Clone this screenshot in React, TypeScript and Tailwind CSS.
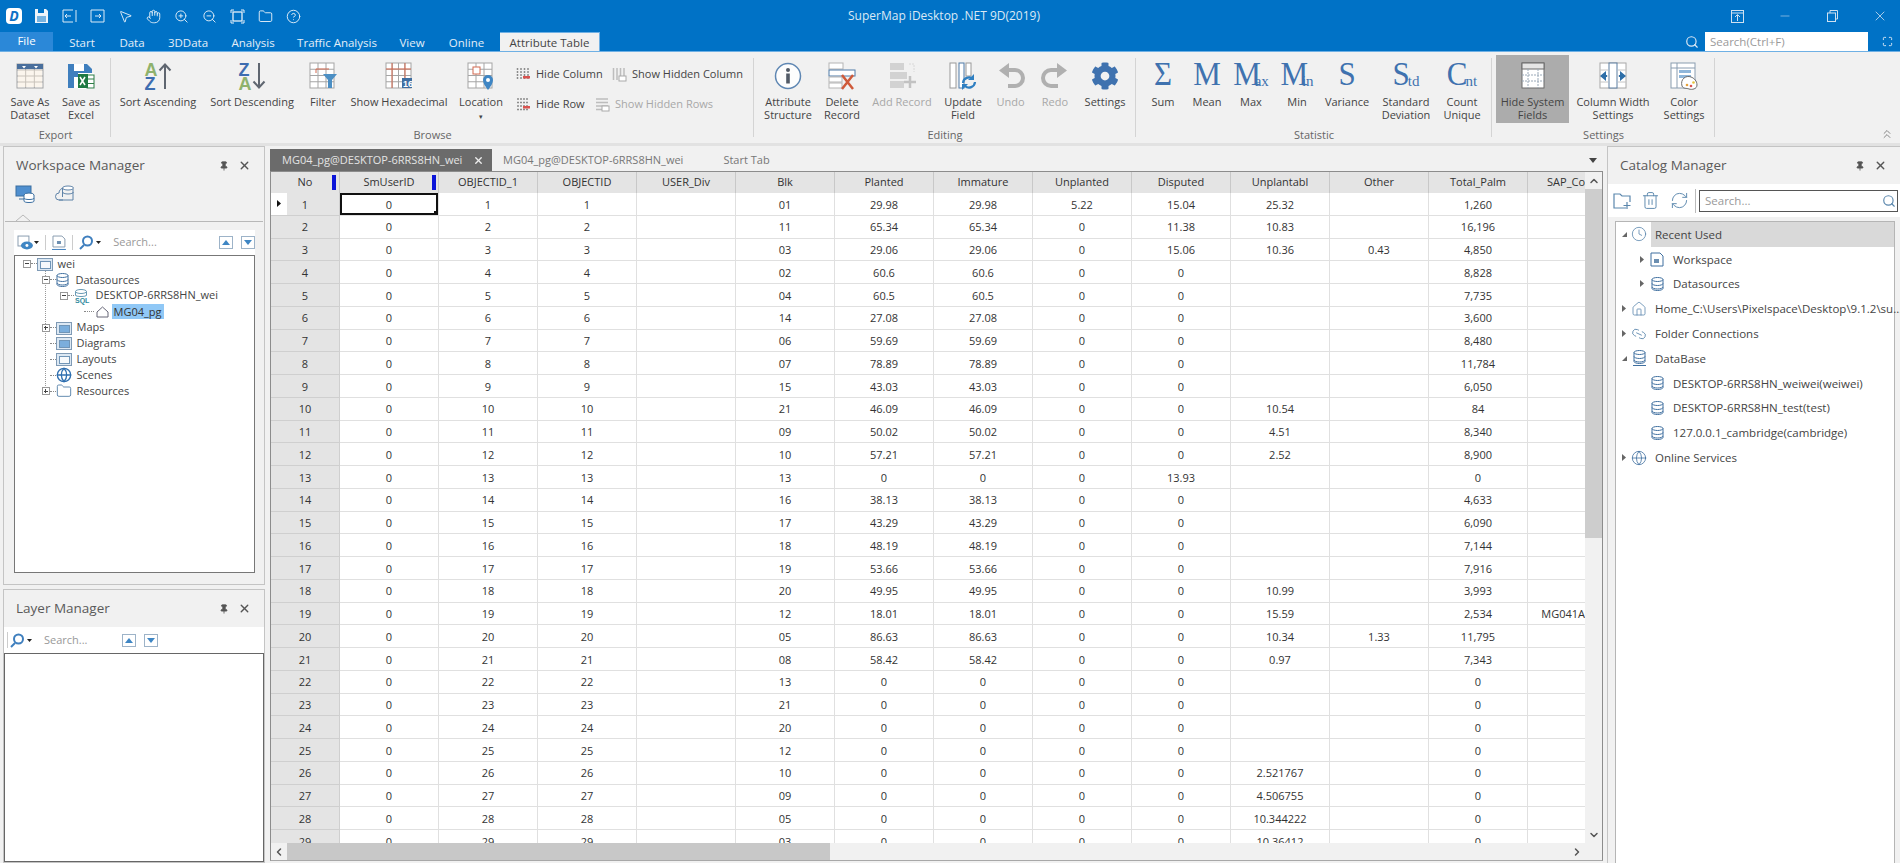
import { ChevronDown, ChevronLeft, ChevronRight, ChevronUp, ChevronsUp, CircleHelp, Clock, Folder, Globe, Hand, House, Link2, Maximize, Minus, MousePointer2, Pin, RefreshCw, Search, Trash2, X, ZoomIn, ZoomOut } from "lucide-react";
import { FaCog } from "react-icons/fa";

const blue = "#3f72af";

/* ---------- small drawings ---------- */

function Grid({ x = 1, y = 1, w = 26, h = 24, cols = 3, rows = 4, line = "#8a8a8a" }: { x?: number; y?: number; w?: number; h?: number; cols?: number; rows?: number; line?: string }) {
  const vs = Array.from({ length: cols - 1 }, (_, i) => x + ((i + 1) * w) / cols);
  const hs = Array.from({ length: rows - 1 }, (_, i) => y + ((i + 1) * h) / rows);
  return (
    <g fill="none" stroke={line} strokeWidth="1">
      <rect x={x} y={y} width={w} height={h} fill="#fff" />
      {vs.map((v) => <line key={v} x1={v} x2={v} y1={y} y2={y + h} />)}
      {hs.map((v) => <line key={v} x1={x} x2={x + w} y1={v} y2={v} />)}
    </g>
  );
}

function Ico({ children, w = 28, h = 28 }: { children: React.ReactNode; w?: number; h?: number }) {
  return <svg width={w} height={h} viewBox={`0 0 ${w} ${h}`} className="block shrink-0 overflow-visible">{children}</svg>;
}

const SaveDataset = () => (
  <Ico>
    <Grid x={1} y={2} w={26} h={24} cols={3} rows={4} line="#a3a3a3" />
    <rect x="2" y="8" width="24" height="17" fill="#f6e9d6" opacity=".45" />
    <rect x="1" y="2" width="26" height="5" fill="#4a6f9c" />
    <path d="M6 4h4l-2 2.500zM18 4h4l-2 2.500z" fill="#fff" />
  </Ico>
);

const SaveExcel = () => (
  <Ico>
    <path d="M1 2h19l5 5v19H1z" fill="#3f7fbe" />
    <rect x="7" y="2" width="10" height="7" fill="#fff" />
    <rect x="7" y="15" width="12" height="11" fill="#fff" />
    <rect x="11" y="11" width="16" height="16" fill="#fff" />
    <rect x="20" y="13" width="7" height="13" fill="none" stroke="#2d7d46" />
    <path d="M20 17h7M20 21.500h7" stroke="#2d7d46" />
    <rect x="11" y="12" width="10" height="14" fill="#1f7a43" />
    <path d="M13 15l5 8M18 15l-5 8" stroke="#fff" strokeWidth="1.500" />
  </Ico>
);

function Sort({ down }: { down?: boolean }) {
  const top = down ? "Z" : "A";
  const bottom = down ? "A" : "Z";
  const color = (c: string) => (c === "A" ? "#8fb26d" : "#3d6db0");
  return (
    <Ico w={30}>
      <text x="1.500" y="13.500" fontSize="18" fontWeight="700" fontFamily="Liberation Sans" fill={color(top)}>{top}</text>
      <text x="1.500" y="27.500" fontSize="18" fontWeight="700" fontFamily="Liberation Sans" fill={color(bottom)}>{bottom}</text>
      {down
        ? <path d="M22 1v24M16.500 19.500l5.500 6 5.500-6" fill="none" stroke="#5f6670" strokeWidth="2" />
        : <path d="M22 27V3M16.500 8.500l5.500-6 5.500 6" fill="none" stroke="#5f6670" strokeWidth="2" />}
    </Ico>
  );
}

const FilterIco = () => (
  <Ico>
    <Grid x={1} y={1} w={24} h={25} line="#a5a5a5" />
    <path d="M7 11V7h13" fill="none" stroke="#d46a50" />
    <path d="M14 12h14l-5 6v8h-4v-8z" fill="#4c8fc4" />
  </Ico>
);

const HexIco = () => (
  <Ico>
    <Grid x={1} y={1} w={25} h={25} cols={4} line="#a5a5a5" />
    <path d="M7 1v25M1 7h25M20 1v18" stroke="#d46a50" fill="none" />
    <rect x="17" y="16" width="10" height="10" fill="#3f6ea0" />
    <text x="18" y="25" fontSize="9" fontWeight="700" fontFamily="Liberation Sans" fill="#fff">16</text>
  </Ico>
);

const LocationIco = () => (
  <Ico>
    <Grid x={1} y={1} w={24} h={25} line="#a5a5a5" />
    <rect x="6" y="5" width="7" height="7" fill="#fff" stroke="#d46a50" />
    <path d="M21 28c-3-4-5-7-5-10a5 5 0 0 1 10 0c0 3-2 6-5 10z" fill="#3f86c4" />
    <circle cx="21" cy="18" r="2" fill="#fff" />
  </Ico>
);

function SmallIco({ kind, dim }: { kind: "col" | "row"; dim?: boolean }) {
  const c = dim ? "#bdbdbd" : "#8c8c8c";
  return (
    <Ico w={14} h={16}>
      {kind === "col"
        ? <path d="M1.500 2v12M5 2v12M8.500 2v12M12 2v12" stroke={c} strokeWidth="1.500" strokeDasharray={dim ? undefined : "2 1"} />
        : <path d="M1 3h12M1 6.500h12M1 10h12M1 13.500h12" stroke={c} strokeWidth="1.500" strokeDasharray={dim ? undefined : "2 1"} />}
      <rect x="7" y="10" width="7" height={dim ? 5 : 2.500} fill={dim ? "#fff" : "#d9534f"} stroke={dim ? "#aaa" : "none"} />
    </Ico>
  );
}

const InfoIco = () => (
  <Ico>
    <circle cx="14" cy="14" r="12.500" fill="#fdfdfd" stroke="#5f87b3" strokeWidth="1.500" />
    <circle cx="14" cy="8" r="2" fill="#525a66" />
    <rect x="12.200" y="11.500" width="3.600" height="10" fill="#525a66" />
  </Ico>
);

const DeleteIco = () => (
  <Ico>
    <rect x="1" y="1" width="14" height="6" fill="#fff" stroke="#b5b5b5" />
    <rect x="1" y="8" width="26" height="6" fill="#fff" stroke="#4e7ba8" />
    <rect x="1" y="15" width="13" height="5" fill="#fff" stroke="#b5b5b5" />
    <rect x="1" y="21" width="13" height="5" fill="#fff" stroke="#b5b5b5" />
    <path d="M14 13l11 14M25 13L14 27" stroke="#cf5a3a" strokeWidth="2.500" />
  </Ico>
);

const AddIco = () => (
  <Ico>
    <path d="M2 1h14v7H2zM2 10h17v7H2zM2 19h14v7H2z" fill="#d2d2d2" />
    <path d="M22 14v12M16 20h12" stroke="#c2c2c2" strokeWidth="2.500" />
    <path d="M21 2h5v8" fill="none" stroke="#d8d8d8" strokeDasharray="2 1" />
  </Ico>
);

const UpdateIco = () => (
  <Ico>
    <rect x="1" y="1" width="6" height="25" fill="#fff" stroke="#9a9a9a" />
    <rect x="10" y="1" width="5" height="25" fill="#fff" stroke="#4e7ba8" />
    <rect x="17" y="1" width="5" height="13" fill="#fff" stroke="#9a9a9a" />
    <path d="M14 21a6 6 0 0 1 10-4M26 20a6 6 0 0 1-10 4" fill="none" stroke="#2f7fc1" strokeWidth="2.200" />
    <path d="M25 12v6h-6zM13 28v-6h6z" fill="#2f7fc1" />
  </Ico>
);

const UndoIco = ({ flip }: { flip?: boolean }) => (
  <svg width="28" height="28" viewBox="0 0 28 28" className={flip ? "block -scale-x-100" : "block"}>
    <path d="M10 8h8a7 7 0 0 1 0 16h-7" fill="none" stroke="#b0b0b0" strokeWidth="4" />
    <path d="M12 1v15L2 8.500z" fill="#b0b0b0" />
  </svg>
);

function Stat({ big, sub, tight }: { big: string; sub?: string; tight?: boolean }) {
  return (
    <span className="flex h-[30px] items-end justify-center font-['Liberation_Serif',serif] leading-none text-[#3f72af]">
      <span className="origin-bottom scale-y-[1.12] text-[31px] leading-[30px]">{big}</span>
      {sub ? <span className={`text-[15px] leading-[20px] ${tight ? "-ml-[6px]" : "-ml-[2px]"}`}>{sub}</span> : null}
    </span>
  );
}

const HideSystemIco = () => (
  <Ico>
    <rect x="3" y="1" width="22" height="25" fill="#fff" stroke="#6b6b6b" />
    <rect x="3" y="1" width="22" height="6" fill="#e5e5e5" stroke="#6b6b6b" />
    <path d="M3 13h22M3 19h22M9 7v19M19 7v19" stroke="#9aa9b8" strokeDasharray="2 1" fill="none" />
  </Ico>
);

const ColWidthIco = () => (
  <Ico>
    <rect x="1" y="1" width="26" height="25" fill="#fff" stroke="#a8a8a8" />
    <rect x="10" y="1" width="8" height="25" fill="#fff" stroke="#5b7da0" />
    <path d="M1 8h8M19 8h8M1 14h8M19 14h8M1 20h8M19 20h8" stroke="#c4c4c4" />
    <path d="M2 14h6M26 14h-6" stroke="#2d6ea8" strokeWidth="2" />
    <path d="M7 9v10l-6-5zM21 9v10l6-5z" fill="#2d6ea8" />
  </Ico>
);

const ColorIco = () => (
  <Ico>
    <rect x="1" y="1" width="24" height="25" fill="#fff" stroke="#8a9db0" />
    <path d="M1 6h24M7 1v25" stroke="#8a9db0" />
    <rect x="9" y="8" width="12" height="3" fill="#8fb6da" />
    <rect x="9" y="13" width="12" height="3" fill="#8fb6da" />
    <path d="M12 24c-2-7 4-11 9-9 3 1 6 4 6 8 0 4-5 5-8 4-2-1-6 0-7-3z" fill="#fff" stroke="#6b6b6b" />
    <circle cx="17" cy="23" r="1.300" fill="#e6a23c" />
    <circle cx="21" cy="24" r="1.300" fill="#d9534f" />
    <circle cx="23.500" cy="20.500" r="1.300" fill="#e6c23c" />
  </Ico>
);

/* ---------- ribbon ---------- */

function RibbonBtn({ w, label, icon, dim, active }: { w: string; label: React.ReactNode; icon: React.ReactNode; dim?: boolean; active?: boolean }) {
  return (
    <div className={`flex h-[68px] shrink-0 flex-col items-center pt-[6px] text-center leading-[13px] ${w} ${active ? "bg-[#acacac]" : ""} ${dim ? "text-[#a8a8a8]" : "text-[#444]"}`}>
      <div className="flex h-[30px] items-center justify-center">{icon}</div>
      <div className="mt-[4px] whitespace-nowrap">{label}</div>
    </div>
  );
}

function RibbonGroup({ w, label, children, pad }: { w: string; label: string; children: React.ReactNode; pad?: string }) {
  return (
    <div className={`relative flex h-[87px] shrink-0 flex-col ${w}`}>
      <div className={`flex h-[68px] ${pad ?? ""}`}>{children}</div>
      <div className="mt-[5px] text-center leading-[14px] text-[#666]">{label}</div>
      <div className="absolute right-0 top-[3px] bottom-[5px] w-px bg-[#d4d4d4]" />
    </div>
  );
}

function Ribbon() {
  return (
    <div className="flex h-[91px] shrink-0 bg-[#f1f1f1] pt-[3px] text-[11px]">
      <RibbonGroup w="w-[111px]" label="Export" pad="pl-[6px]">
        <RibbonBtn w="w-[48px]" icon={<SaveDataset />} label={<>Save As<br />Dataset</>} />
        <RibbonBtn w="w-[54px]" icon={<SaveExcel />} label={<>Save as<br />Excel</>} />
      </RibbonGroup>
      <RibbonGroup w="w-[643px]" label="Browse">
        <RibbonBtn w="w-[94px]" icon={<Sort />} label="Sort Ascending" />
        <RibbonBtn w="w-[94px]" icon={<Sort down />} label="Sort Descending" />
        <RibbonBtn w="w-[48px]" icon={<FilterIco />} label="Filter" />
        <RibbonBtn w="w-[104px]" icon={<HexIco />} label="Show Hexadecimal" />
        <RibbonBtn w="w-[60px]" icon={<LocationIco />} label={<>Location<br /><span className="text-[7px]">▾</span></>} />
        <div className="flex flex-col gap-[8px] pl-[5px] pt-[8px] text-[#444]">
          <div className="flex h-[22px] items-center">
            <SmallIco kind="col" />
            <span className="ml-[6px] w-[66px] whitespace-nowrap">Hide Column</span>
            <span className="ml-[10px]"><SmallIco kind="col" dim /></span>
            <span className="ml-[6px] whitespace-nowrap">Show Hidden Column</span>
          </div>
          <div className="flex h-[22px] items-center">
            <SmallIco kind="row" />
            <span className="ml-[6px] w-[49px] whitespace-nowrap">Hide Row</span>
            <span className="ml-[10px]"><SmallIco kind="row" dim /></span>
            <span className="ml-[6px] whitespace-nowrap text-[#a8a8a8]">Show Hidden Rows</span>
          </div>
        </div>
      </RibbonGroup>
      <RibbonGroup w="w-[382px]" label="Editing" pad="pl-[5px]">
        <RibbonBtn w="w-[58px]" icon={<InfoIco />} label={<>Attribute<br />Structure</>} />
        <RibbonBtn w="w-[50px]" icon={<DeleteIco />} label={<>Delete<br />Record</>} />
        <RibbonBtn w="w-[70px]" dim icon={<AddIco />} label="Add Record" />
        <RibbonBtn w="w-[52px]" icon={<UpdateIco />} label={<>Update<br />Field</>} />
        <RibbonBtn w="w-[43px]" dim icon={<UndoIco />} label="Undo" />
        <RibbonBtn w="w-[46px]" dim icon={<UndoIco flip />} label="Redo" />
        <RibbonBtn w="w-[54px]" icon={<FaCog size={28} color={blue} />} label="Settings" />
      </RibbonGroup>
      <RibbonGroup w="w-[356px]" label="Statistic" pad="pl-[5px]">
        <RibbonBtn w="w-[44px]" icon={<Stat big="Σ" />} label="Sum" />
        <RibbonBtn w="w-[44px]" icon={<Stat big="M" />} label="Mean" />
        <RibbonBtn w="w-[44px]" icon={<Stat big="M" sub="ax" tight />} label="Max" />
        <RibbonBtn w="w-[48px]" icon={<Stat big="M" sub="in" tight />} label="Min" />
        <RibbonBtn w="w-[52px]" icon={<Stat big="S" />} label="Variance" />
        <RibbonBtn w="w-[66px]" icon={<Stat big="S" sub="td" />} label={<>Standard<br />Deviation</>} />
        <RibbonBtn w="w-[46px]" icon={<Stat big="C" sub="nt" />} label={<>Count<br />Unique</>} />
      </RibbonGroup>
      <RibbonGroup w="w-[223px]" label="Settings" pad="pl-[4px]">
        <RibbonBtn w="w-[73px]" active icon={<HideSystemIco />} label={<>Hide System<br />Fields</>} />
        <RibbonBtn w="w-[88px]" icon={<ColWidthIco />} label={<>Column Width<br />Settings</>} />
        <RibbonBtn w="w-[54px]" icon={<ColorIco />} label={<>Color<br />Settings</>} />
      </RibbonGroup>
      <div className="flex flex-1 items-end justify-end pb-[2px] pr-[6px]">
        <ChevronsUp size={14} color="#777" strokeWidth={1.500} />
      </div>
    </div>
  );
}

/* ---------- title bar and tabs ---------- */

const Logo = () => (
  <span className="flex h-[16px] w-[16px] items-center justify-center rounded-[4px] bg-white text-[14px] font-bold italic leading-none text-[#0f72c6]">D</span>
);

const ArrowBox = ({ right }: { right?: boolean }) => (
  <svg width="15" height="14" viewBox="0 0 15 14" className="block" fill="none" stroke="#dcebf7">
    {right ? <path d="M4 1H1v12h3M4 1h10v12H4" /> : <path d="M11 1H1v12h10M14 1v12" />}
    {right ? <path d="M5 7h6M9 5l2 2-2 2" /> : <path d="M9 7H3M5 5L3 7l2 2" />}
  </svg>
);

const FloppyIco = () => (
  <svg width="15" height="16" viewBox="0 0 15 16" className="block">
    <path d="M1 1h11l2 2v12H1z" fill="#eef4fa" />
    <rect x="4" y="1" width="6" height="4" fill="#0072c6" />
    <path d="M3 9h9M3 11h9M3 13h9" stroke="#0072c6" />
  </svg>
);

const FitIco = () => (
  <svg width="15" height="15" viewBox="0 0 15 15" fill="none" stroke="#e4eff8" className="block">
    <rect x="3" y="3" width="9" height="9" strokeWidth="1.300" />
    <path d="M1 4V1h3M11 1h3v3M14 11v3h-3M4 14H1v-3" />
  </svg>
);

function TitleBar() {
  const ic = { size: 15, color: "#e4eff8", strokeWidth: 1.500 };
  return (
    <div className="flex h-[32px] shrink-0 items-center bg-[#0072c6] text-[12px] text-[#dbe9f5]">
      <div className="flex flex-1 items-center">
        <div className="flex w-[22px] justify-end"><Logo /></div>
        <div className="ml-[12px] flex items-center gap-[13px]">
          <FloppyIco />
          <ArrowBox />
          <ArrowBox right />
          <MousePointer2 {...ic} />
          <Hand {...ic} />
          <ZoomIn {...ic} />
          <ZoomOut {...ic} />
          <FitIco />
          <Folder {...ic} />
          <CircleHelp {...ic} />
        </div>
      </div>
      <div>SuperMap iDesktop .NET 9D(2019)</div>
      <div className="flex flex-1 items-center justify-end gap-[34.500px] pr-[12px]">
        <svg width="13" height="13" viewBox="0 0 13 13" fill="none" stroke="#cfe1f1"><rect x=".5" y=".5" width="12" height="12" /><path d="M.5 3h12M6.500 11V5M4 7l2.500-2.500L9 7" /></svg>
        <Minus size={14} color="#a9cbe8" strokeWidth={1.200} />
        <svg width="11" height="12" viewBox="0 0 11 12" fill="none" stroke="#cfe1f1"><rect x=".5" y="3" width="8" height="8.500" /><path d="M3 3V.5h7.500V9H8.500" /></svg>
        <X size={16} color="#cfe1f1" strokeWidth={1.200} />
      </div>
    </div>
  );
}

function TabRow() {
  const tabs: [string, string][] = [
    ["Start", "w-[58px]"],
    ["Data", "w-[42px]"],
    ["3DData", "w-[70px]"],
    ["Analysis", "w-[60px]"],
    ["Traffic Analysis", "w-[108px]"],
    ["View", "w-[42px]"],
    ["Online", "w-[67px]"],
  ];
  return (
    <div className="flex h-[20px] shrink-0 items-stretch border-b border-[#6fb0e4] bg-[#0072c6] text-[11.500px] text-[#e3eef8]">
      <div className="flex w-[53px] items-center justify-center bg-[#2b88d8] pb-[2px] text-white">File</div>
      {tabs.map(([t, w]) => (
        <div key={t} className={`flex items-center justify-center pt-[2px] ${w}`}>{t}</div>
      ))}
      <div className="flex w-[100px] items-center justify-center border-r border-t border-[#6fb0e4] bg-[#f1f1f1] pt-[2px] text-[#444]">Attribute Table</div>
      <div className="flex flex-1 items-center justify-end pr-[2px]">
        <Search size={14} color="#dfeaf5" strokeWidth={2} className="mr-[6px]" />
        <div className="flex h-[19px] w-[163px] items-center bg-white pl-[5px] text-[#9a9a9a]">Search(Ctrl+F)</div>
        <Maximize size={11} color="#dfeaf5" className="ml-[14px] mr-[5px]" />
      </div>
    </div>
  );
}

/* ---------- panels ---------- */

function PanelHead({ title }: { title: string }) {
  return (
    <div className="flex h-[37px] shrink-0 items-center pl-[12px] pr-[13px] text-[13.500px] text-[#5a5a5a]">
      <span className="flex-1">{title}</span>
      <Pin size={10} color="#555" fill="#555" />
      <X size={13} color="#555" strokeWidth={2.500} className="ml-[9px]" />
    </div>
  );
}

const UpDownBtn = ({ up }: { up?: boolean }) => (
  <span className="flex h-[13px] w-[14px] items-center justify-center border border-[#9db3c8] bg-white">
    <svg width="8" height="5" viewBox="0 0 8 5"><path d={up ? "M0 5h8L4 0z" : "M0 0h8L4 5z"} fill="#3f86c4" /></svg>
  </span>
);

const SearchLoop = () => (
  <span className="flex items-center">
    <svg width="14" height="15" viewBox="0 0 14 15" fill="none" stroke="#3f7fbe" strokeWidth="2"><circle cx="8.500" cy="6" r="4.500" /><path d="M5 10l-4 4" /></svg>
    <svg width="5" height="3" viewBox="0 0 5 3" className="ml-[3px]"><path d="M0 0h5L2.500 3z" fill="#222" /></svg>
  </span>
);

const Db = ({ c = "#3f6f9f" }: { c?: string }) => (
  <svg width="13" height="14" viewBox="0 0 13 14" fill="none" stroke={c} className="block shrink-0"><ellipse cx="6.500" cy="2.500" rx="5.500" ry="2" /><path d="M1 2.500v9c0 1 2.500 2 5.500 2s5.500-1 5.500-2v-9M1 6.500c0 1 2.500 2 5.500 2s5.500-1 5.500-2M1 10c0 1 2.500 2 5.500 2s5.500-1 5.500-2" /></svg>
);

const SqlIco = () => (
  <svg width="16" height="14" viewBox="0 0 16 14" className="block shrink-0 overflow-visible">
    <g fill="none" stroke="#6a9bb5"><ellipse cx="7" cy="2.500" rx="5.500" ry="2" /><path d="M1.500 2.500v4M12.500 2.500v4M1.500 6c0 1 2.500 1.500 5.500 1.500s5.500-.5 5.500-1.500" /></g>
    <text x="1" y="14" fontSize="7" fontWeight="700" fontFamily="Liberation Sans" fill="#2f8a9e">SQL</text>
  </svg>
);

const Box = ({ kind }: { kind: "minus" | "plus" }) => (
  <span className="relative z-10 flex h-[8px] w-[8px] shrink-0 items-center justify-center border border-[#999] bg-white">
    <span className="h-px w-[4px] bg-[#444]" />
    {kind === "plus" ? <span className="absolute h-[4px] w-px bg-[#444]" /> : null}
  </span>
);

const MiniFolder = ({ inner = "#5b9bd5" }: { inner?: string }) => (
  <svg width="16" height="14" viewBox="0 0 16 14" className="block shrink-0">
    <rect x=".5" y="1.500" width="15" height="12" fill="#dce8f3" stroke="#7f9ab5" />
    <rect x="3.500" y="4.500" width="10" height="7" fill={inner} opacity=".75" stroke="#4d7aa3" />
  </svg>
);

function TreeRow({ pad, box, icon, children }: { pad: string; box?: "minus" | "plus"; icon: React.ReactNode; children: React.ReactNode }) {
  return (
    <div className={`flex h-[15.900px] items-center whitespace-nowrap ${pad}`}>
      {box ? <Box kind={box} /> : <span className="w-[8px]" />}
      <span className="h-px w-[6px] border-t border-dotted border-[#888]" />
      {icon}
      <span className="ml-[5px]">{children}</span>
    </div>
  );
}

function WorkspacePanel() {
  return (
    <div className="flex h-[439px] shrink-0 flex-col border border-[#c4c4c4] bg-[#f1f1f1]">
      <PanelHead title="Workspace Manager" />
      <div className="flex h-[37px] shrink-0 items-start gap-[20px] pl-[11px] pt-[1px]">
        <svg width="20" height="18" viewBox="0 0 20 18"><rect x="1" y="1" width="15" height="10" fill="#4f8fcf" stroke="#3a6ea0" /><path d="M4 14h5" stroke="#3a6ea0" /><ellipse cx="14" cy="10" rx="5" ry="2" fill="#fff" stroke="#3a6ea0" /><path d="M9 10v6c0 1 2 1.500 5 1.500s5-.5 5-1.500v-6M9 13c0 1 2 1.500 5 1.500s5-.5 5-1.500" fill="#fff" stroke="#3a6ea0" /></svg>
        <svg width="20" height="17" viewBox="0 0 20 17" fill="none" stroke="#5f83a8"><path d="M8 15H4a3 3 0 0 1 0-7 5 5 0 0 1 5-5" /><path d="M4 15h14V4" /><ellipse cx="13" cy="3" rx="5.500" ry="2" fill="#fff" /><path d="M7.500 3v9M7.500 7c0 1 2.500 2 5.500 2s5.500-1 5.500-2" /></svg>
      </div>
      <div className="relative mx-[1px] h-px shrink-0 bg-[#b8b8b8]">
        <svg width="14" height="7" viewBox="0 0 14 7" className="absolute -top-[7px] left-[11px]"><path d="M0 7l7-6 7 6" fill="#f1f1f1" stroke="#b8b8b8" /></svg>
      </div>
      <div className="mt-[8px] flex h-[25px] w-[241px] shrink-0 items-center self-center bg-white pl-[3px] text-[11px] text-[#999]">
        <svg width="17" height="16" viewBox="0 0 17 16" fill="none"><rect x="1" y="1" width="11" height="10" stroke="#8a9db0" /><ellipse cx="10" cy="10.500" rx="6" ry="4" fill="#3f86c4" /><circle cx="10" cy="10.500" r="1.500" fill="#fff" /></svg>
        <svg width="5" height="3" viewBox="0 0 5 3" className="ml-[1px]"><path d="M0 0h5L2.500 3z" fill="#222" /></svg>
        <span className="mx-[6px] h-[15px] w-px bg-[#ccc]" />
        <svg width="14" height="15" viewBox="0 0 14 15" fill="none"><path d="M1 1h9l3 3v8H1z" stroke="#8a9db0" /><rect x="5" y="6" width="4" height="3" fill="#6b8eb0" /><path d="M0 14.500h14" stroke="#3f7fbe" /></svg>
        <span className="mx-[6px] h-[15px] w-px bg-[#ccc]" />
        <SearchLoop />
        <span className="ml-[12px] w-[106px]">Search...</span>
        <UpDownBtn up />
        <span className="ml-[8px]"><UpDownBtn /></span>
      </div>
      <div className="relative mx-auto h-[318px] w-[241px] shrink-0 border border-[#777] bg-white text-[11px] text-[#444]">
        <div className="absolute bottom-[182px] left-[30px] top-[15px] border-l border-dotted border-[#999]" />
        <TreeRow pad="pl-[8px]" box="minus" icon={<MiniFolder inner="#ffffff" />}>wei</TreeRow>
        <TreeRow pad="pl-[27px]" box="minus" icon={<Db />}><span className="ml-[2px]">Datasources</span></TreeRow>
        <TreeRow pad="pl-[45px]" box="minus" icon={<SqlIco />}><span className="ml-[1px]">DESKTOP-6RRS8HN_wei</span></TreeRow>
        <div className="flex h-[15.900px] items-center pl-[69px]">
          <span className="mr-[2px] w-[10px] border-t border-dotted border-[#888]" />
          <svg width="13" height="12" viewBox="0 0 13 12" fill="none" stroke="#667"><path d="M1 11V6l5.500-5L12 6v5z" /></svg>
          <span className="ml-[3px] bg-[#90c8f6] px-[2px] leading-[15px] text-[#333]">MG04_pg</span>
        </div>
        <TreeRow pad="pl-[27px]" box="plus" icon={<MiniFolder />}>Maps</TreeRow>
        <TreeRow pad="pl-[27px]" icon={<MiniFolder />}>Diagrams</TreeRow>
        <TreeRow pad="pl-[27px]" icon={<MiniFolder inner="#ffffff" />}>Layouts</TreeRow>
        <TreeRow pad="pl-[27px]" icon={<Globe size={16} color="#2f6fb0" />}>Scenes</TreeRow>
        <TreeRow pad="pl-[27px]" box="plus" icon={<Folder size={16} color="#4d7aa3" strokeWidth={1.300} />}>Resources</TreeRow>
      </div>
    </div>
  );
}

function LayerPanel() {
  return (
    <div className="mt-[4px] flex min-h-0 flex-1 flex-col border border-[#c4c4c4] bg-[#f1f1f1]">
      <PanelHead title="Layer Manager" />
      <div className="flex h-[26px] shrink-0 items-center bg-white pl-[3px] text-[11px] text-[#999]">
        <span className="mr-[2px] h-[16px] w-px bg-[#ccc]" />
        <SearchLoop />
        <span className="ml-[12px] w-[78px]">Search...</span>
        <UpDownBtn up />
        <span className="ml-[8px]"><UpDownBtn /></span>
      </div>
      <div className="flex-1 border border-[#666] bg-white" />
    </div>
  );
}

function CatRow({ pad, arrow, icon, sel, children }: { pad: string; arrow?: "open" | "closed"; icon: React.ReactNode; sel?: boolean; children: React.ReactNode }) {
  return (
    <div className={`flex h-[24.800px] items-center whitespace-nowrap ${pad}`}>
      <span className="flex w-[10px] shrink-0 justify-center">
        {arrow === "open" ? <svg width="5" height="5" viewBox="0 0 5 5"><path d="M5 0v5H0z" fill="#666" /></svg> : null}
        {arrow === "closed" ? <svg width="4" height="7" viewBox="0 0 4 7"><path d="M0 0l4 3.500L0 7z" fill="#666" /></svg> : null}
      </span>
      <span className="flex w-[20px] shrink-0 justify-center">{icon}</span>
      <span className={`ml-[2px] flex h-full flex-1 items-center pl-[4px] ${sel ? "bg-[#d9d9d9]" : ""}`}>{children}</span>
    </div>
  );
}

const DocIco = () => (
  <svg width="14" height="15" viewBox="0 0 14 15" fill="none" stroke="#3f6f9f" className="block"><path d="M1 1h9l3 3v10H1z" /><rect x="4" y="7" width="5" height="4" fill="#6b8eb0" stroke="none" /></svg>
);

function CatalogPanel() {
  const c = "#5b87ad";
  return (
    <div className="ml-[4px] flex w-[293px] shrink-0 flex-col border-l border-t border-[#c4c4c4] bg-[#f1f1f1]">
      <PanelHead title="Catalog Manager" />
      <div className="flex h-[33px] shrink-0 items-center bg-white pl-[5px] pr-[2px] text-[11.500px]">
        <svg width="20" height="18" viewBox="0 0 20 18" fill="none" stroke={c} strokeWidth="1.200"><path d="M13 16H1V2h6l2 2h8v6" /><path d="M14 10v7M10.500 13.500h7" /></svg>
        <Trash2 size={19} color={c} strokeWidth={1.200} className="ml-[8px]" />
        <RefreshCw size={19} color={c} strokeWidth={1.200} className="ml-[10px]" />
        <span className="ml-[6px] h-[24px] w-px bg-[#bbb]" />
        <div className="ml-[3px] flex h-[22px] flex-1 items-center border border-[#555] bg-white pl-[5px] pr-[1px] text-[#999]">
          <span className="flex-1">Search...</span>
          <Search size={14} color={c} />
        </div>
      </div>
      <div className="ml-[7px] mr-[5px] mt-[4px] flex-1 border-l border-r border-t border-[#b5b5b5] bg-white text-[11.500px] text-[#444]">
        <CatRow pad="pl-[3px]" arrow="open" sel icon={<Clock size={16} color={c} strokeWidth={1.200} />}>Recent Used</CatRow>
        <CatRow pad="pl-[21px]" arrow="closed" icon={<DocIco />}>Workspace</CatRow>
        <CatRow pad="pl-[21px]" arrow="closed" icon={<Db />}>Datasources</CatRow>
        <CatRow pad="pl-[3px]" arrow="closed" icon={<House size={16} color={c} strokeWidth={1.200} />}>Home_C:\Users\Pixelspace\Desktop\9.1.2\su...</CatRow>
        <CatRow pad="pl-[3px]" arrow="closed" icon={<Link2 size={16} color={c} strokeWidth={1.200} className="rotate-[25deg]" />}>Folder Connections</CatRow>
        <CatRow pad="pl-[3px]" arrow="open" icon={<span className="border-b border-[#3f6f9f] pb-px"><Db /></span>}>DataBase</CatRow>
        <CatRow pad="pl-[21px]" icon={<Db />}>DESKTOP-6RRS8HN_weiwei(weiwei)</CatRow>
        <CatRow pad="pl-[21px]" icon={<Db />}>DESKTOP-6RRS8HN_test(test)</CatRow>
        <CatRow pad="pl-[21px]" icon={<Db />}>127.0.0.1_cambridge(cambridge)</CatRow>
        <CatRow pad="pl-[3px]" arrow="closed" icon={<Globe size={16} color="#3f6f9f" strokeWidth={1.200} />}>Online Services</CatRow>
      </div>
    </div>
  );
}

/* ---------- attribute table ---------- */

const heads = ["SmUserID", "OBJECTID_1", "OBJECTID", "USER_Div", "Blk", "Planted", "Immature", "Unplanted", "Disputed", "Unplantabl", "Other", "Total_Palm", "SAP_Co"];

// blk, planted, immature, unplanted, disputed, unplantabl, other, total, sap
const rows: string[][] = [
  ["01", "29.98", "29.98", "5.22", "15.04", "25.32", "", "1,260", ""],
  ["11", "65.34", "65.34", "0", "11.38", "10.83", "", "16,196", ""],
  ["03", "29.06", "29.06", "0", "15.06", "10.36", "0.43", "4,850", ""],
  ["02", "60.6", "60.6", "0", "0", "", "", "8,828", ""],
  ["04", "60.5", "60.5", "0", "0", "", "", "7,735", ""],
  ["14", "27.08", "27.08", "0", "0", "", "", "3,600", ""],
  ["06", "59.69", "59.69", "0", "0", "", "", "8,480", ""],
  ["07", "78.89", "78.89", "0", "0", "", "", "11,784", ""],
  ["15", "43.03", "43.03", "0", "0", "", "", "6,050", ""],
  ["21", "46.09", "46.09", "0", "0", "10.54", "", "84", ""],
  ["09", "50.02", "50.02", "0", "0", "4.51", "", "8,340", ""],
  ["10", "57.21", "57.21", "0", "0", "2.52", "", "8,900", ""],
  ["13", "0", "0", "0", "13.93", "", "", "0", ""],
  ["16", "38.13", "38.13", "0", "0", "", "", "4,633", ""],
  ["17", "43.29", "43.29", "0", "0", "", "", "6,090", ""],
  ["18", "48.19", "48.19", "0", "0", "", "", "7,144", ""],
  ["19", "53.66", "53.66", "0", "0", "", "", "7,916", ""],
  ["20", "49.95", "49.95", "0", "0", "10.99", "", "3,993", ""],
  ["12", "18.01", "18.01", "0", "0", "15.59", "", "2,534", "MG041A"],
  ["05", "86.63", "86.63", "0", "0", "10.34", "1.33", "11,795", ""],
  ["08", "58.42", "58.42", "0", "0", "0.97", "", "7,343", ""],
  ["13", "0", "0", "0", "0", "", "", "0", ""],
  ["21", "0", "0", "0", "0", "", "", "0", ""],
  ["20", "0", "0", "0", "0", "", "", "0", ""],
  ["12", "0", "0", "0", "0", "", "", "0", ""],
  ["10", "0", "0", "0", "0", "2.521767", "", "0", ""],
  ["09", "0", "0", "0", "0", "4.506755", "", "0", ""],
  ["05", "0", "0", "0", "0", "10.344222", "", "0", ""],
  ["03", "0", "0", "0", "0", "10.36412", "", "0", ""],
];

function AttrTable() {
  return (
    <div className="ml-[5px] flex w-[1333px] shrink-0 flex-col pt-[3px]">
      <div className="flex h-[22px] shrink-0 items-center text-[11px] text-[#777]">
        <div className="flex h-full w-[222px] items-center justify-between bg-[#6b6b6b] pl-[12px] pr-[8px] text-[#e4e4e4]">
          <span>MG04_pg@DESKTOP-6RRS8HN_wei</span>
          <X size={11} color="#eee" strokeWidth={3} />
        </div>
        <span className="ml-[11px]">MG04_pg@DESKTOP-6RRS8HN_wei</span>
        <span className="ml-[40px] flex-1">Start Tab</span>
        <svg width="8" height="5" viewBox="0 0 8 5" className="mr-[6px]"><path d="M0 0h8L4 5z" fill="#444" /></svg>
      </div>
      <div className="mb-[2px] flex min-h-0 flex-1 flex-col border border-[#8c8c8c] border-b-[#a8a8a8] bg-white text-[11px] text-[#333]">
        <div className="flex min-h-0 flex-1">
          <div className="w-[1314px] shrink-0 overflow-hidden">
            <div className="flex h-[21px] bg-[#e4e4e4]">
              <div className="relative flex w-[69px] shrink-0 items-center justify-center border-r border-[#c8c8c8]">
                No
                <span className="absolute right-[3px] top-[3px] h-[15px] w-[4px] bg-[#0a14d8]" />
              </div>
              {heads.map((h, i) => (
                <div key={h} className={`relative flex shrink-0 items-center border-r border-[#c8c8c8] ${i === 12 ? "w-[57px] justify-end border-r-0" : "w-[99px] justify-center"}`}>
                  {h}
                  {i === 0 ? <span className="absolute right-[2px] top-[3px] h-[15px] w-[4px] bg-[#0a14d8]" /> : null}
                </div>
              ))}
            </div>
            {rows.map((r, i) => (
              <div key={i} className="flex h-[22.750px]">
                <div className="flex w-[69px] shrink-0 border-b border-r border-[#cfcfcf] bg-[#e4e4e4]">
                  {i === 0 ? (
                    <span className="flex w-[16px] shrink-0 items-center justify-center bg-white">
                      <svg width="4" height="7" viewBox="0 0 4 7"><path d="M0 0l4 3.500L0 7z" fill="#111" /></svg>
                    </span>
                  ) : (
                    <span className="w-[16px] shrink-0" />
                  )}
                  <span className="flex flex-1 items-center justify-center pr-[16px] pt-[2px]">{i + 1}</span>
                </div>
                <div className={`relative flex w-[99px] shrink-0 items-center justify-center border-b border-r border-[#e0e0e0] pt-[2px] ${i === 0 ? "shadow-[inset_0_0_0_2px_#111]" : ""}`}>
                  0
                  {i === 0 ? <span className="absolute bottom-0 right-0 h-[4px] w-[4px] bg-[#111]" /> : null}
                </div>
                <Cell>{i + 1}</Cell>
                <Cell>{i + 1}</Cell>
                <Cell />
                {r.slice(0, 8).map((v, j) => <Cell key={j}>{v}</Cell>)}
                <div className="flex w-[57px] shrink-0 items-center justify-end overflow-hidden whitespace-nowrap border-b border-[#e0e0e0] pt-[2px]">{r[8]}</div>
              </div>
            ))}
          </div>
          <div className="flex w-[17px] shrink-0 flex-col bg-[#f1f1f1]">
            <div className="flex h-[17px] shrink-0 items-center justify-center"><ChevronUp size={12} color="#555" strokeWidth={3} /></div>
            <div className="h-[349px] shrink-0 bg-[#cdcdcd]" />
            <div className="flex-1" />
            <div className="flex h-[17px] shrink-0 items-center justify-center"><ChevronDown size={12} color="#555" strokeWidth={3} /></div>
          </div>
        </div>
        <div className="flex h-[17px] shrink-0 items-center bg-[#f1f1f1]">
          <div className="flex w-[16px] shrink-0 justify-center"><ChevronLeft size={12} color="#555" strokeWidth={3} /></div>
          <div className="h-full w-[543px] bg-[#c8c8c8]" />
          <div className="flex-1" />
          <div className="mr-[17px] flex w-[17px] shrink-0 justify-center"><ChevronRight size={12} color="#555" strokeWidth={3} /></div>
        </div>
      </div>
    </div>
  );
}

function Cell({ children }: { children?: React.ReactNode }) {
  return <div className="flex w-[99px] shrink-0 items-center justify-center whitespace-nowrap border-b border-r border-[#e0e0e0] pt-[2px]">{children}</div>;
}

export default function App() {
  return (
    <div className="flex h-screen w-full flex-col overflow-hidden bg-[#f1f1f1] font-['Open_Sans',sans-serif]">
      <TitleBar />
      <TabRow />
      <Ribbon />
      <div className="flex min-h-0 flex-1 border-t-[3px] border-[#e2e2e2]">
        <div className="ml-[3px] flex w-[262px] shrink-0 flex-col">
          <WorkspacePanel />
          <LayerPanel />
        </div>
        <AttrTable />
        <CatalogPanel />
      </div>
    </div>
  );
}
